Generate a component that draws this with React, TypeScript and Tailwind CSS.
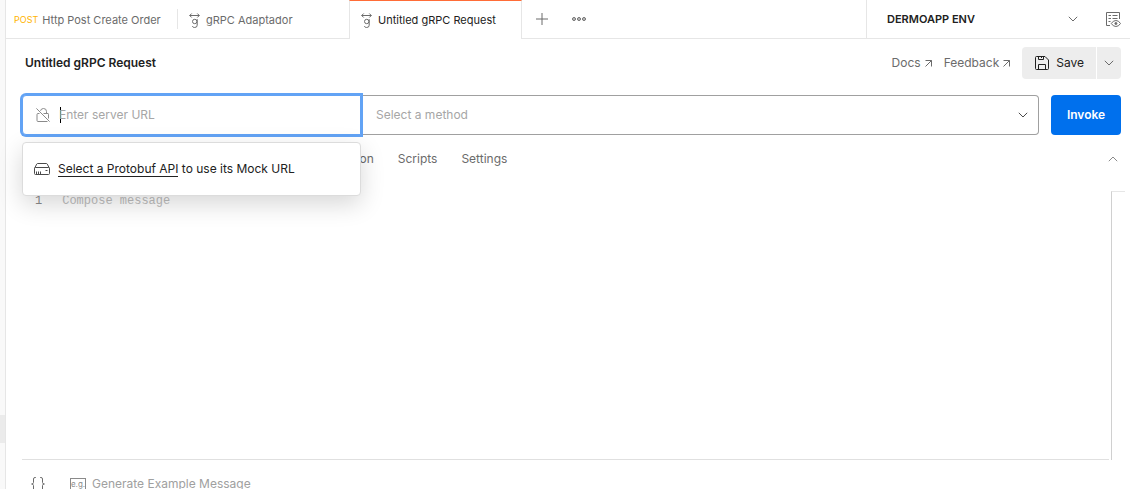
import type { ReactNode } from "react";

function Chevron({ className, up = false }: { className?: string; up?: boolean }) {
  return (
    <svg width="10" height="6" viewBox="0 0 10 6" fill="none" stroke="currentColor" aria-hidden="true" className={className}>
      <path d={up ? "M0.8 5.2 5 1l4.2 4.2" : "M0.8 0.8 5 5 9.2 0.8"} />
    </svg>
  );
}

function GrpcIcon() {
  return (
    <svg width="11" height="15" viewBox="0 0 11 15" fill="none" stroke="currentColor" aria-hidden="true" className="shrink-0 text-[#6b6b6b]">
      <path d="M.7 2.500h9.600M2.700.5l-2 2 2 2M8.300.5l2 2-2 2" />
      <circle cx="5.700" cy="8.500" r="2.200" />
      <path d="M8.200 6.200v6q0 2.300-2.500 2.300-1.900 0-2.400-1.300" />
    </svg>
  );
}

function UnlockedIcon() {
  return (
    <svg width="14" height="14" viewBox="0 0 14 14" fill="none" stroke="currentColor" aria-hidden="true" className="shrink-0 text-[#8a8a8a]">
      <path d="M3.500 5.500H2q-1 0-1 1v6q0 1 1 1h9.500M7.500 5.500H12q.5 0 .5.800v4.200M4.500 2.800Q5 .5 7.500.5q3 0 3 3v2M.4.400l13.200 13.200" />
    </svg>
  );
}

function ServerIcon() {
  return (
    <svg width="16" height="12" viewBox="0 0 16 12" fill="none" stroke="currentColor" aria-hidden="true" className="shrink-0 text-[#4a4a4a]">
      <path d="M.5 5.500 2.700 1.100Q3 .5 3.700.5h8.600q.7 0 1 .6l2.200 4.400v5q0 1-1 1h-13q-1 0-1-1zM.5 5.500q.2-1 1-1h13q.8 0 1 1M2.500 8.500v3M4.500 8.500v3M6.500 8.500v3M11.500 7.500h2" />
    </svg>
  );
}

function SaveIcon() {
  return (
    <svg width="14" height="14" viewBox="0 0 14 14" fill="none" stroke="currentColor" aria-hidden="true">
      <path d="M.5 1.500q0-1 1-1H10L13.500 4v8.500q0 1-1 1h-11q-1 0-1-1zM3.500.5v3h5v-3M3.500 13.500v-5h7v5M6.500.5v1.500" />
    </svg>
  );
}

function EnvironmentIcon() {
  return (
    <svg width="15" height="15" viewBox="0 0 15 15" fill="none" stroke="currentColor" aria-hidden="true">
      <path d="M13.500 7V.5H.5v13H4M2.500 3.500h2.500M6.500 3.500h5M2.500 6.500h2.500M6.500 6.500h5M2.500 9.500h2" />
      <path d="M5.300 11.500q1.800-3 4.600-3t4.600 3q-1.800 3-4.600 3t-4.600-3z" />
      <circle cx="9.900" cy="11.500" r="1" fill="currentColor" />
    </svg>
  );
}

function BracesIcon() {
  return (
    <svg width="14" height="14" viewBox="0 0 14 14" fill="none" stroke="currentColor" aria-hidden="true">
      <path d="M4.800.5H4q-1.500 0-1.500 1.500v3.500Q2.500 7 .6 7q1.900 0 1.900 1.500V12q0 1.500 1.500 1.500h.8M9.200.5h.8q1.500 0 1.500 1.500v3.500Q11.500 7 13.400 7q-1.900 0-1.900 1.500V12q0 1.500-1.500 1.500h-.8" />
    </svg>
  );
}

function ExternalLink({ children }: { children: ReactNode }) {
  return (
    <a href="#" className="flex items-center gap-1 text-[#6b6b6b]">
      {children}
      <svg width="7" height="7" viewBox="0 0 7 7" fill="none" stroke="currentColor" aria-hidden="true">
        <path d="M.5.5h6v6M6.500.5l-6 6" />
      </svg>
    </a>
  );
}

function TopBar() {
  return (
    <header className="flex h-[39px] shrink-0 text-[11px] text-[#6b6b6b]">
      <div className="flex w-[172px] items-center border-b border-[#e6e6e6]">
        <button className="flex h-5 w-full items-center gap-1 border-r border-[#e6e6e6] pt-0.5 pl-2 text-left">
          <span className="text-[9px] text-[#ffb400]">POST</span>
          <span className="whitespace-nowrap">Http Post Create Order</span>
        </button>
      </div>
      <button className="flex w-[171px] items-center gap-1.5 border-b border-[#e6e6e6] pt-0.5 pl-[11px]">
        <GrpcIcon />
        gRPC Adaptador
      </button>
      <button className="flex w-[173px] items-center gap-1.5 border-x border-t border-x-[#e6e6e6] border-t-[#ff6c37] pl-[11px] text-[#212121]">
        <GrpcIcon />
        Untitled gRPC Request
      </button>
      <div className="flex flex-1 items-center gap-6 border-b border-[#e6e6e6] pl-3.5">
        <button aria-label="New tab">
          <svg width="12" height="12" viewBox="0 0 12 12" stroke="currentColor" aria-hidden="true">
            <path d="M6 0v12M0 6h12" />
          </svg>
        </button>
        <button aria-label="Tab options">
          <svg width="14" height="4" viewBox="0 0 14 4" fill="#d0d0d0" stroke="currentColor" aria-hidden="true">
            <circle cx="2" cy="2" r="1.500" />
            <circle cx="7" cy="2" r="1.500" />
            <circle cx="12" cy="2" r="1.500" />
          </svg>
        </button>
      </div>
      <div className="flex w-[264px] items-center border-b border-l border-[#e6e6e6] pr-[9px] pl-5">
        <button className="flex flex-1 items-center justify-between pr-7 font-semibold text-[#212121]">
          DERMOAPP ENV
          <Chevron className="text-[#6b6b6b]" />
        </button>
        <button aria-label="Environment quick look">
          <EnvironmentIcon />
        </button>
      </div>
    </header>
  );
}

function TitleRow() {
  return (
    <div className="flex items-center justify-between pt-2 pl-[3px]">
      <h1 className="font-semibold text-[#212121]">Untitled gRPC Request</h1>
      <div className="flex items-center gap-3">
        <ExternalLink>Docs</ExternalLink>
        <ExternalLink>Feedback</ExternalLink>
        <div className="flex gap-px text-[#212121]">
          <button className="flex h-8 items-center gap-[7px] rounded-l bg-[#ededed] pr-3 pl-[13px]">
            <SaveIcon />
            Save
          </button>
          <button aria-label="More save options" className="flex h-8 w-6 items-center justify-center rounded-r bg-[#ededed] text-[#6b6b6b]">
            <Chevron />
          </button>
        </div>
      </div>
    </div>
  );
}

function RequestRow() {
  return (
    <div className="mt-4 flex gap-3">
      <div className="flex h-10 flex-1">
        <div className="relative flex w-[339px] items-center gap-[10px] rounded-l border border-[#62a3f5] bg-white pl-[13px] ring-2 ring-[#62a3f5]">
          <UnlockedIcon />
          <span className="h-4 w-px bg-black" />
          <input
            aria-label="Server URL"
            placeholder="Enter server URL"
            className="-ml-3 min-w-0 flex-1 bg-transparent outline-none placeholder:text-[#a6a6a6]"
          />
          <div className="absolute -inset-x-px top-[46px] z-10 flex h-[54px] items-center gap-2 rounded border border-[#dcdcdc] bg-white pl-[11px] shadow-[0_8px_24px_rgba(0,0,0,0.16)]">
            <ServerIcon />
            <p className="text-[#212121]">
              <a href="#" className="border-b border-[#212121]">Select a Protobuf API</a> to use its Mock URL
            </p>
          </div>
        </div>
        <button className="flex flex-1 items-center justify-between rounded-r border border-l-0 border-[#a0a0a0] pr-2.5 pl-[15px] text-[#a6a6a6]">
          Select a method
          <Chevron className="text-[#4a4a4a]" />
        </button>
      </div>
      <button className="h-10 w-[70px] rounded bg-[#0070ed] font-semibold text-white">Invoke</button>
    </div>
  );
}

const sections = ["Message", "Authorization", "Metadata", "Service definition", "Scripts", "Settings"];

function SectionTabs() {
  return (
    <div className="mt-4 flex items-center justify-between pr-[3px]">
      <nav className="flex gap-6 text-[#6b6b6b]">
        {sections.map((name) => (
          <button key={name} className="whitespace-nowrap">{name}</button>
        ))}
      </nav>
      <button aria-label="Collapse" className="text-[#8a8a8a]">
        <Chevron up />
      </button>
    </div>
  );
}

function MessageEditor() {
  return (
    <div className="-mr-1 mt-6 flex min-h-0 flex-1">
      <label className="mr-0.5 flex flex-1 gap-5 border-b border-[#e0e0e0] pt-0.5 pl-[13px] font-['Liberation_Mono',monospace]">
        <span className="text-[#8a8a8a]">1</span>
        <textarea
          aria-label="Message"
          placeholder="Compose message"
          className="flex-1 resize-none outline-none placeholder:text-[#bdbdbd]"
        />
      </label>
      <div className="w-3.5 border-t border-l border-t-[#e6e6e6] border-l-[#d0d0d0]" />
    </div>
  );
}

function Footer() {
  return (
    <footer className="flex h-[29px] shrink-0 gap-[25px] overflow-hidden pt-4 pl-[9px] text-[#a0a0a0]">
      <button aria-label="Beautify" className="h-4 text-[#6b6b6b]">
        <BracesIcon />
      </button>
      <button className="flex h-4 items-center gap-1.5">
        <span className="flex h-3 w-4 items-center justify-center border border-[#8a8a8a] text-[8px] leading-none text-[#8a8a8a]">e.g.</span>
        Generate Example Message
      </button>
    </footer>
  );
}

export default function App() {
  return (
    <div className="flex h-screen overflow-hidden bg-white font-['Inter',sans-serif] text-[12px] leading-4">
      <aside className="flex w-[6px] shrink-0 flex-col justify-end border-r border-[#e6e6e6] bg-[#f9f9f9] pb-[46px]">
        <div className="h-7 bg-[#ebebeb]" />
      </aside>
      <div className="flex min-w-0 flex-1 flex-col">
        <TopBar />
        <main className="flex min-h-0 flex-1 flex-col pr-[9px] pl-4">
          <TitleRow />
          <RequestRow />
          <SectionTabs />
          <MessageEditor />
          <Footer />
        </main>
      </div>
    </div>
  );
}
